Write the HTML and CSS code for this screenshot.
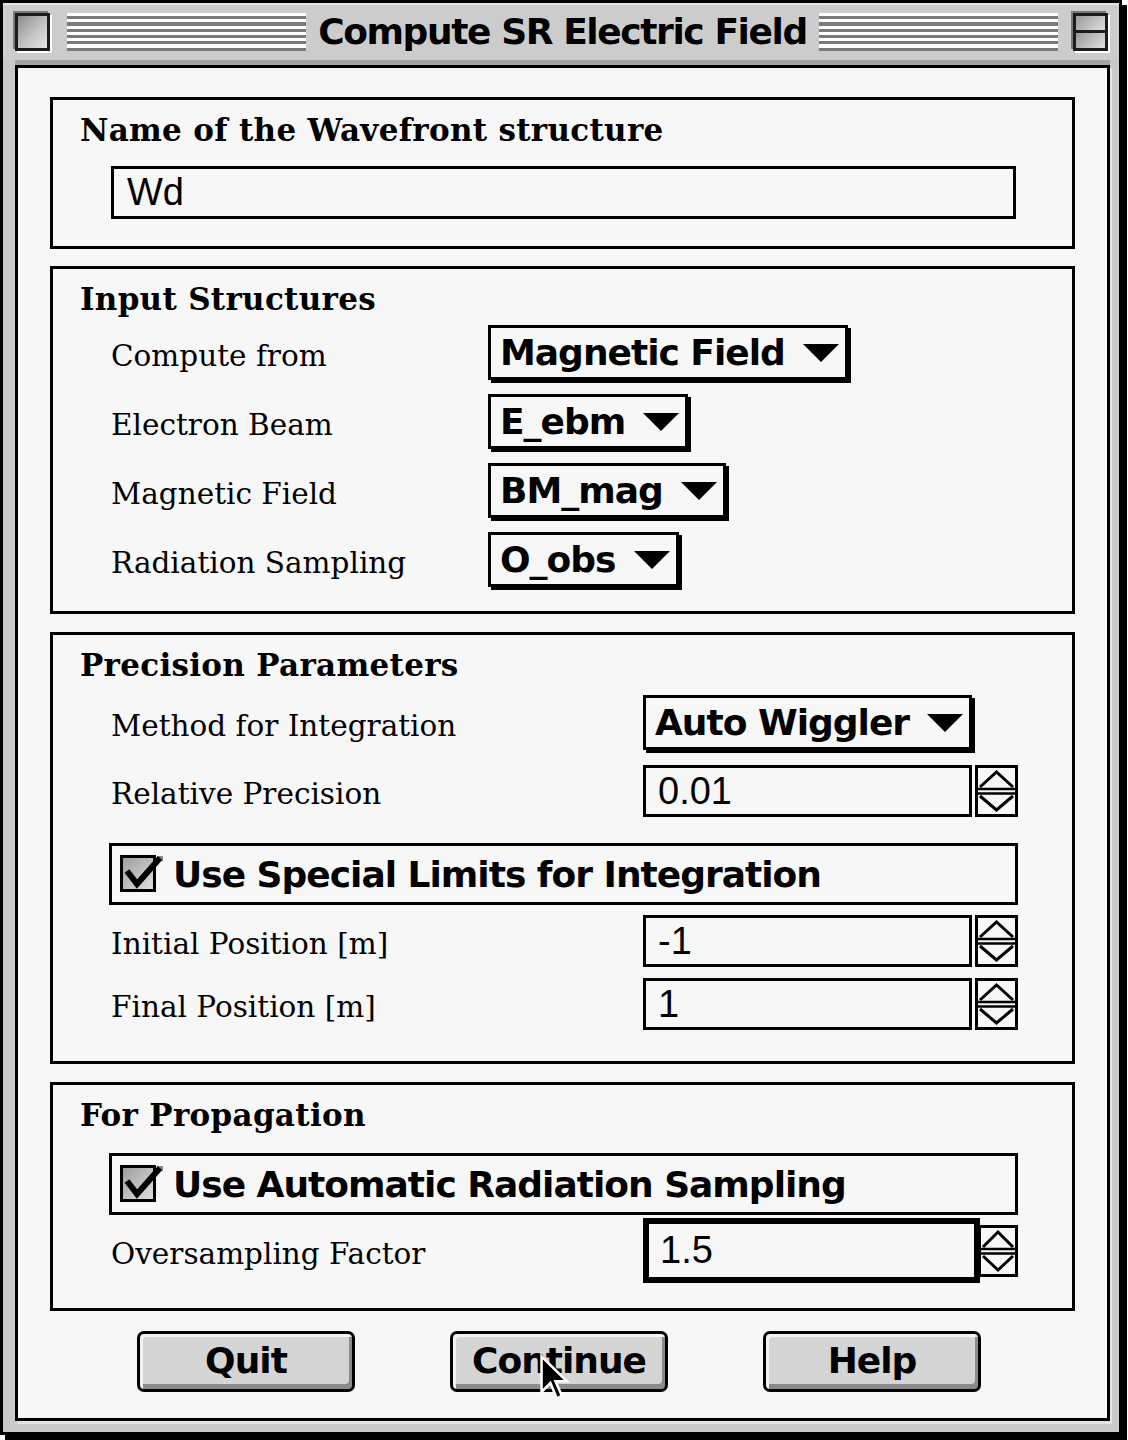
FILE: index.html
```html
<!DOCTYPE html>
<html>
<head>
<meta charset="utf-8">
<title>Compute SR Electric Field</title>
<link rel="stylesheet" href="styles.css">
</head>
<body>
<div class="window">
  <div class="titlebar">
    <div class="closebox"></div>
    <div class="stripes"></div>
    <div class="title">Compute SR Electric Field</div>
    <div class="stripes"></div>
    <div class="zoombox"><span></span><span></span></div>
  </div>
  <div class="content">
    <section class="group g1">
      <h2 class="gtitle">Name of the Wavefront structure</h2>
      <div class="field name-field">Wd</div>
    </section>

    <section class="group g2">
      <h2 class="gtitle">Input Structures</h2>
      <div class="rows rows-pop">
        <div class="row row-pop"><span class="label">Compute from</span><span class="popup">Magnetic Field<i class="tri"></i></span></div>
        <div class="row row-pop"><span class="label">Electron Beam</span><span class="popup">E_ebm<i class="tri"></i></span></div>
        <div class="row row-pop"><span class="label">Magnetic Field</span><span class="popup">BM_mag<i class="tri"></i></span></div>
        <div class="row row-pop"><span class="label">Radiation Sampling</span><span class="popup">O_obs<i class="tri"></i></span></div>
      </div>
    </section>

    <section class="group g3">
      <h2 class="gtitle">Precision Parameters</h2>
      <div class="row row-pop r-method"><span class="label wide">Method for Integration</span><span class="popup">Auto Wiggler<i class="tri"></i></span></div>
      <div class="row row-field r-prec"><span class="label wide">Relative Precision</span><span class="field num">0.01</span>
        <svg class="stepper" viewBox="0 0 43 52" width="43" height="52"><rect x="1.5" y="1.5" width="40" height="49" fill="#f7f7f7" stroke="#000" stroke-width="3"/><line x1="1" y1="24" x2="42" y2="24" stroke="#000" stroke-width="2.5"/><line x1="1" y1="28.5" x2="42" y2="28.5" stroke="#000" stroke-width="2.5"/><polyline points="5,22 21.5,7 38,22" fill="none" stroke="#000" stroke-width="3"/><polyline points="5,31 21.5,45 38,31" fill="none" stroke="#000" stroke-width="3"/></svg>
      </div>
      <div class="checkrow r-special">
        <svg class="check" viewBox="0 0 44 38" width="44" height="38"><defs><linearGradient id="cg1" x1="0" y1="0" x2="1" y2="1"><stop offset="0" stop-color="#9a9a9a"/><stop offset="1" stop-color="#e2e2e2"/></linearGradient></defs><rect x="1.5" y="1.5" width="33" height="34" fill="url(#cg1)" stroke="#000" stroke-width="3"/><rect x="37" y="1" width="6" height="5" fill="#8a8a8a"/><polyline points="7,16 17,29 40,3" fill="none" stroke="#000" stroke-width="6" stroke-linejoin="miter"/></svg>
        <span class="checktext">Use Special Limits for Integration</span>
      </div>
      <div class="row row-field r-init"><span class="label wide">Initial Position [m]</span><span class="field num">-1</span>
        <svg class="stepper" viewBox="0 0 43 52" width="43" height="52"><rect x="1.5" y="1.5" width="40" height="49" fill="#f7f7f7" stroke="#000" stroke-width="3"/><line x1="1" y1="24" x2="42" y2="24" stroke="#000" stroke-width="2.5"/><line x1="1" y1="28.5" x2="42" y2="28.5" stroke="#000" stroke-width="2.5"/><polyline points="5,22 21.5,7 38,22" fill="none" stroke="#000" stroke-width="3"/><polyline points="5,31 21.5,45 38,31" fill="none" stroke="#000" stroke-width="3"/></svg>
      </div>
      <div class="row row-field r-final"><span class="label wide">Final Position [m]</span><span class="field num">1</span>
        <svg class="stepper" viewBox="0 0 43 52" width="43" height="52"><rect x="1.5" y="1.5" width="40" height="49" fill="#f7f7f7" stroke="#000" stroke-width="3"/><line x1="1" y1="24" x2="42" y2="24" stroke="#000" stroke-width="2.5"/><line x1="1" y1="28.5" x2="42" y2="28.5" stroke="#000" stroke-width="2.5"/><polyline points="5,22 21.5,7 38,22" fill="none" stroke="#000" stroke-width="3"/><polyline points="5,31 21.5,45 38,31" fill="none" stroke="#000" stroke-width="3"/></svg>
      </div>
    </section>

    <section class="group g4">
      <h2 class="gtitle">For Propagation</h2>
      <div class="checkrow r-auto">
        <svg class="check" viewBox="0 0 44 38" width="44" height="38"><defs><linearGradient id="cg2" x1="0" y1="0" x2="1" y2="1"><stop offset="0" stop-color="#9a9a9a"/><stop offset="1" stop-color="#e2e2e2"/></linearGradient></defs><rect x="1.5" y="1.5" width="33" height="34" fill="url(#cg2)" stroke="#000" stroke-width="3"/><rect x="37" y="1" width="6" height="5" fill="#8a8a8a"/><polyline points="7,16 17,29 40,3" fill="none" stroke="#000" stroke-width="6" stroke-linejoin="miter"/></svg>
        <span class="checktext">Use Automatic Radiation Sampling</span>
      </div>
      <div class="row row-focus r-over"><span class="label wide">Oversampling Factor</span><span class="field num focused">1.5</span>
        <svg class="stepper stepper-f" viewBox="0 0 40 52" width="40" height="52"><rect x="1.5" y="1.5" width="37" height="49" fill="#f7f7f7" stroke="#000" stroke-width="3"/><line x1="1" y1="24" x2="39" y2="24" stroke="#000" stroke-width="2.5"/><line x1="1" y1="28.5" x2="39" y2="28.5" stroke="#000" stroke-width="2.5"/><polyline points="5,22 20,7 35,22" fill="none" stroke="#000" stroke-width="3"/><polyline points="5,31 20,45 35,31" fill="none" stroke="#000" stroke-width="3"/></svg>
      </div>
    </section>

    <div class="buttons">
      <button class="btn">Quit</button>
      <button class="btn">Continue</button>
      <button class="btn">Help</button>
    </div>

    <svg class="cursor" viewBox="0 0 13 19" width="33" height="50"><path d="M1 1 L1 15 L4.5 11.5 L7 17.5 L9 16.5 L6.5 10.8 L11 10.8 Z" fill="#000" stroke="#fff" stroke-width="1" stroke-linejoin="miter"/></svg>
  </div>
</div>
</body>
</html>
```

FILE: styles.css
```css
* {
  box-sizing: border-box;
  margin: 0;
  padding: 0;
}

html, body {
  background: #ffffff;
}

body {
  width: 1128px;
  height: 1440px;
  overflow: hidden;
}

.window {
  width: 1122px;
  height: 1435px;
  border: 3px solid #000;
  box-shadow: 5px 5px 0 #000;
  background: #c9c9c9;
  display: flex;
  flex-direction: column;
  padding: 0 9px 11px 12px;
}

/* ---------- title bar ---------- */
.titlebar {
  height: 57px;
  margin: 0 -9px 0 -12px;
  display: flex;
  align-items: center;
  padding: 0 11px 0 12px;
  background: #cccccc;
  box-shadow: inset 0 2px 0 #e2e2e2;
}

.closebox {
  width: 35px;
  height: 38px;
  flex: 0 0 35px;
  border: 3px solid #1c1c1c;
  background: linear-gradient(135deg, #8c8c8c 0%, #c4c4c4 55%, #e6e6e6 100%);
  box-shadow: -2px -2px 0 #7a7a7a, 2px 2px 0 #ffffff;
}

.stripes {
  flex: 1 1 auto;
  height: 38px;
  background: repeating-linear-gradient(to bottom, #ffffff 0, #ffffff 3px, #7a7a7a 3px, #7a7a7a 6.3px);
}

.closebox + .stripes {
  margin-left: 17px;
}

.title {
  padding: 0 12px;
  font-family: "DejaVu Sans", sans-serif;
  font-weight: bold;
  font-size: 36px;
  letter-spacing: -1.4px;
  color: #000;
  white-space: nowrap;
  line-height: 40px;
}

.zoombox {
  width: 35px;
  height: 38px;
  flex: 0 0 35px;
  margin-left: 15px;
  border: 3px solid #1c1c1c;
  display: flex;
  flex-direction: column;
  box-shadow: -2px -2px 0 #7a7a7a, 2px 2px 0 #ffffff;
}

.zoombox span {
  flex: 1;
  background: linear-gradient(135deg, #9a9a9a, #e0e0e0);
}

.zoombox span:first-child {
  border-bottom: 3px solid #1c1c1c;
}

/* ---------- content ---------- */
.content {
  position: relative;
  flex: 1;
  margin-top: 5px;
  border: 3px solid #000;
  background: #f7f7f7;
  padding: 29px 32px 0 32px;
  display: flex;
  flex-direction: column;
  box-shadow: 0 -5px 0 #a6a6a6, 2px 3px 0 #e4e4e4;
}

.group {
  border: 3px solid #000;
  padding: 10px 0 0 27px;
}

.g1 { height: 152px; }
.g2 { height: 348px; margin-top: 17px; }
.g3 { height: 432px; margin-top: 18px; }
.g4 { height: 229px; margin-top: 18px; }

.gtitle {
  font-family: "DejaVu Serif", serif;
  font-weight: bold;
  font-size: 31px;
  letter-spacing: 0.3px;
  line-height: 40px;
  color: #000;
  white-space: nowrap;
}

/* fields */
.field {
  display: flex;
  align-items: center;
  height: 52px;
  border: 3px solid #000;
  background: #f7f7f7;
  font-family: "Liberation Sans", sans-serif;
  font-size: 38px;
  color: #000;
  white-space: nowrap;
}

.name-field {
  margin: 16px 0 0 31px;
  width: 905px;
  height: 53px;
  padding-left: 13px;
}

.num {
  width: 329px;
  padding-left: 12px;
}

.focused {
  width: 337px;
  height: 65px;
  border-width: 6px;
  padding-left: 11px;
}

/* rows */
.rows-pop {
  margin-top: 6px;
  display: flex;
  flex-direction: column;
  gap: 14px;
}

.row {
  display: flex;
  align-items: center;
  padding-left: 31px;
}

.row-pop { height: 55px; }
.row-field { height: 52px; }
.row-focus { height: 65px; }

.label {
  flex: 0 0 377px;
  font-family: "DejaVu Serif", serif;
  font-size: 29.5px;
  color: #000;
  padding-top: 6px;
  white-space: nowrap;
}

.label.wide {
  flex-basis: 532px;
}

.popup {
  display: inline-flex;
  align-items: center;
  height: 55px;
  border: 3px solid #000;
  box-shadow: 3px 3px 0 #000;
  background: #f7f7f7;
  padding: 0 6px 0 9px;
  gap: 18px;
  font-family: "DejaVu Sans", sans-serif;
  font-weight: bold;
  font-size: 36px;
  letter-spacing: -1px;
  color: #000;
  white-space: nowrap;
}

.tri {
  display: block;
  width: 0;
  height: 0;
  border-left: 18px solid transparent;
  border-right: 18px solid transparent;
  border-top: 18px solid #000;
}

.stepper {
  display: block;
  margin-left: 3px;
  flex: 0 0 auto;
}

.stepper-f {
  margin-left: -2px;
}

.r-method { margin-top: 10px; }
.r-prec { margin-top: 15px; }
.r-special { margin-top: 26px; }
.r-init { margin-top: 10px; }
.r-final { margin-top: 11px; }
.r-auto { margin-top: 18px; }
.r-over { margin-top: 3px; }

.checkrow {
  display: flex;
  align-items: center;
  margin-left: 29px;
  width: 909px;
  height: 62px;
  border: 3px solid #000;
  padding-left: 8px;
}

.check {
  display: block;
  flex: 0 0 auto;
  overflow: visible;
}

.checktext {
  margin-left: 9px;
  font-family: "DejaVu Sans", sans-serif;
  font-weight: bold;
  font-size: 36px;
  letter-spacing: -1px;
  color: #000;
  white-space: nowrap;
}

/* buttons */
.buttons {
  margin-top: 20px;
  height: 61px;
  display: flex;
  gap: 95px;
  padding-left: 87px;
}

.btn {
  width: 218px;
  height: 61px;
  border: 3px solid #000;
  border-radius: 7px;
  background: #d5d5d5;
  box-shadow: inset 3px 3px 0 #f2f2f2, inset -3px -5px 0 #8a8a8a;
  font-family: "DejaVu Sans", sans-serif;
  font-weight: bold;
  font-size: 36px;
  letter-spacing: -1px;
  color: #000;
  padding-bottom: 3px;
}

.cursor {
  position: absolute;
  left: 521px;
  top: 1285px;
}
```
